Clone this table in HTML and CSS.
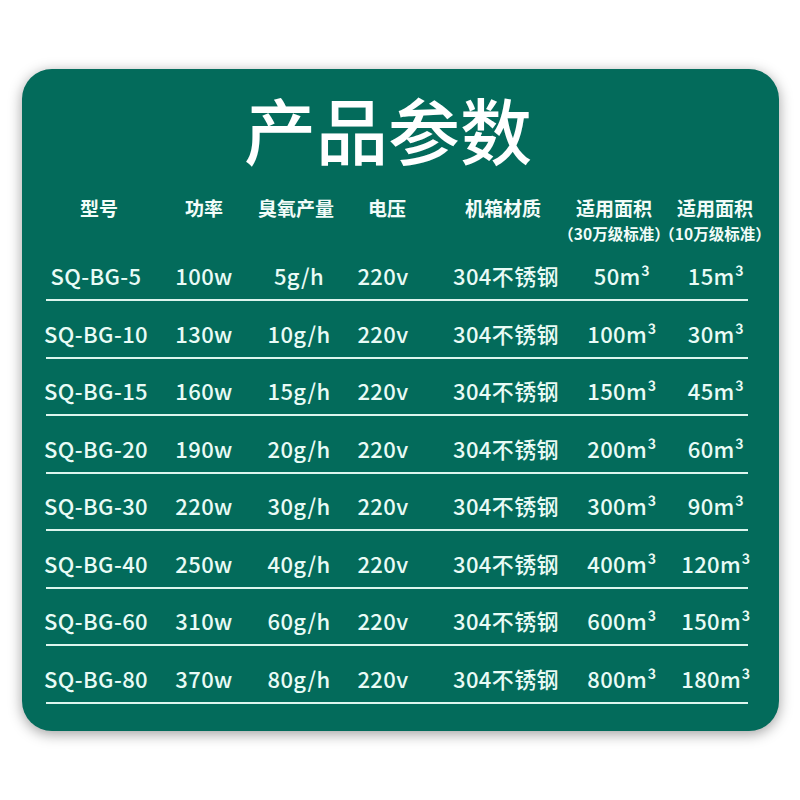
FILE: index.html
```html
<!DOCTYPE html>
<html lang="zh-CN">
<head>
<meta charset="utf-8">
<title>产品参数</title>
<link rel="stylesheet" href="styles.css">
</head>
<body>
<div class="card">
  <h1 class="title">产品参数</h1>
  <div class="table">
    <div class="row head">
      <div class="cell">型号</div>
      <div class="cell">功率</div>
      <div class="cell">臭氧产量</div>
      <div class="cell">电压</div>
      <div class="cell">机箱材质</div>
      <div class="cell">适用面积<span class="sub">（30万级标准）</span></div>
      <div class="cell">适用面积<span class="sub">（10万级标准）</span></div>
    </div>
    <div class="row data"><div class="cell">SQ-BG-5</div><div class="cell">100w</div><div class="cell">5g/h</div><div class="cell">220v</div><div class="cell">304不锈钢</div><div class="cell">50m³</div><div class="cell">15m³</div></div>
    <div class="row data"><div class="cell">SQ-BG-10</div><div class="cell">130w</div><div class="cell">10g/h</div><div class="cell">220v</div><div class="cell">304不锈钢</div><div class="cell">100m³</div><div class="cell">30m³</div></div>
    <div class="row data"><div class="cell">SQ-BG-15</div><div class="cell">160w</div><div class="cell">15g/h</div><div class="cell">220v</div><div class="cell">304不锈钢</div><div class="cell">150m³</div><div class="cell">45m³</div></div>
    <div class="row data"><div class="cell">SQ-BG-20</div><div class="cell">190w</div><div class="cell">20g/h</div><div class="cell">220v</div><div class="cell">304不锈钢</div><div class="cell">200m³</div><div class="cell">60m³</div></div>
    <div class="row data"><div class="cell">SQ-BG-30</div><div class="cell">220w</div><div class="cell">30g/h</div><div class="cell">220v</div><div class="cell">304不锈钢</div><div class="cell">300m³</div><div class="cell">90m³</div></div>
    <div class="row data"><div class="cell">SQ-BG-40</div><div class="cell">250w</div><div class="cell">40g/h</div><div class="cell">220v</div><div class="cell">304不锈钢</div><div class="cell">400m³</div><div class="cell">120m³</div></div>
    <div class="row data"><div class="cell">SQ-BG-60</div><div class="cell">310w</div><div class="cell">60g/h</div><div class="cell">220v</div><div class="cell">304不锈钢</div><div class="cell">600m³</div><div class="cell">150m³</div></div>
    <div class="row data"><div class="cell">SQ-BG-80</div><div class="cell">370w</div><div class="cell">80g/h</div><div class="cell">220v</div><div class="cell">304不锈钢</div><div class="cell">800m³</div><div class="cell">180m³</div></div>
  </div>
</div>
</body>
</html>
```

FILE: styles.css
```css
html, body {
  margin: 0;
  padding: 0;
  background: #ffffff;
}
body {
  width: 800px;
  height: 800px;
  padding-top: 69px;
  box-sizing: border-box;
  font-family: "Noto Sans CJK SC", "Noto Sans", sans-serif;
}
.card {
  margin-left: 22px;
  width: 757px;
  height: 662px;
  box-sizing: border-box;
  background: #036b5b;
  border-radius: 30px;
  box-shadow: 0 3px 14px rgba(0, 0, 0, 0.38);
  padding: 23px 0 0 24px;
  color: #e9fbf6;
}
.title {
  margin: 0;
  height: 72px;
  line-height: 72px;
  font-size: 72px;
  font-weight: 500;
  color: #ffffff;
  text-align: center;
  padding-right: 49px;
}
.table {
  width: 702px;
  margin-top: 32px;
}
.row {
  display: grid;
  grid-template-columns: 106px 104px 80px 102px 130px 92px 110px;
  white-space: nowrap;
}
.cell {
  text-align: center;
  display: flex;
  flex-direction: column;
  align-items: center;
}
.head {
  font-size: 19px;
  font-weight: 700;
  line-height: 24px;
  height: 47.5px;
  color: #f2fcf9;
}
.sub {
  display: block;
  font-size: 15.5px;
  line-height: 20px;
  margin-top: 3px;
}
.data {
  height: 57.5px;
  box-sizing: border-box;
  padding-top: 16.5px;
  font-size: 22px;
  line-height: 30px;
  font-weight: 500;
  border-bottom: 2px solid #dcf5ee;
  letter-spacing: 0.4px;
}
.data .cell:nth-child(1) {
  padding-right: 6px;
}
.data .cell:nth-child(3) {
  padding-left: 6px;
}
.data .cell:nth-child(4) {
  padding-right: 8px;
}
.data .cell:nth-child(5) {
  padding-left: 6px;
}
.data .cell:nth-child(6) {
  padding-left: 16px;
}
.data .cell:nth-child(7) {
  padding-left: 2px;
}
```
